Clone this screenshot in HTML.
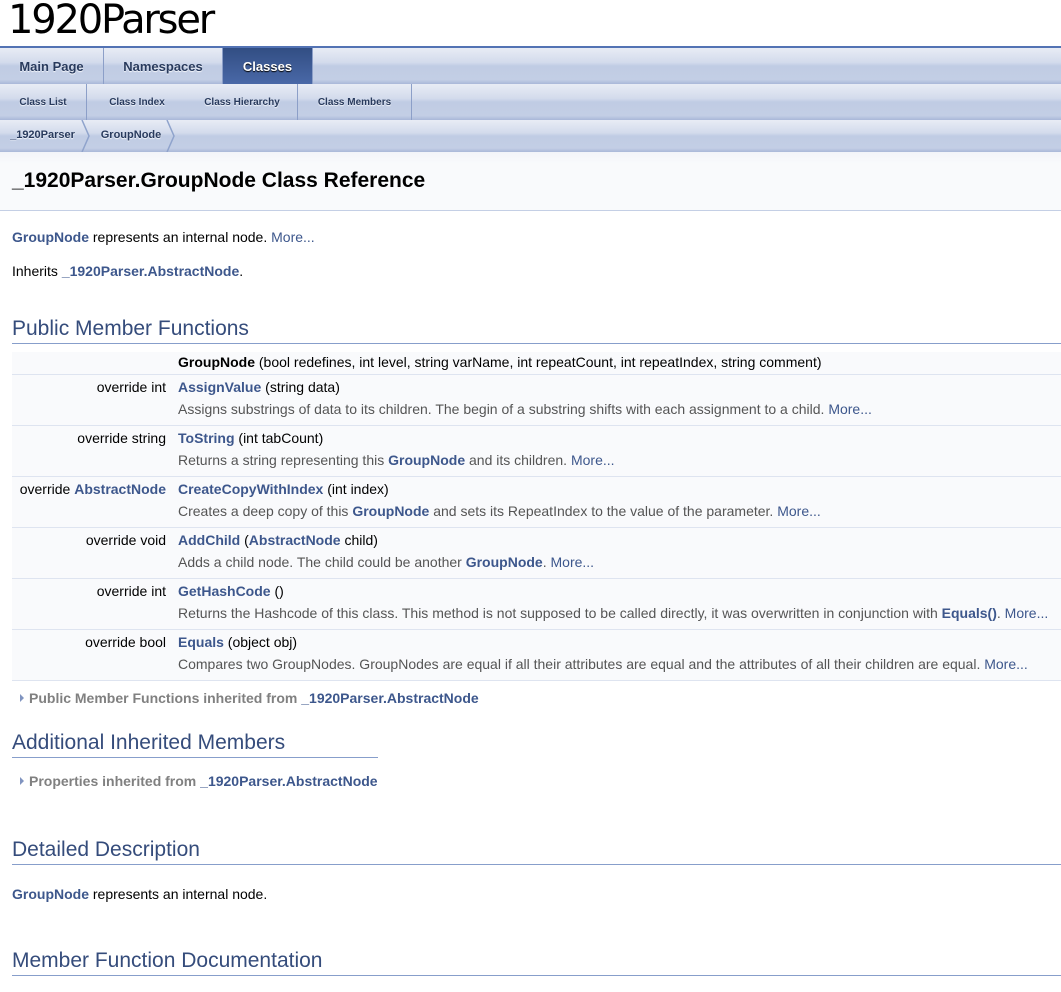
<!DOCTYPE html>
<html><head><meta charset="utf-8"><style>
*{margin:0;padding:0;box-sizing:border-box}
body{width:1061px;height:992px;overflow:hidden;background:#fff;font-family:"Liberation Sans",Arial,sans-serif;font-size:14px;color:#000;position:relative}
.a{position:absolute;white-space:nowrap}
b.l,.l{color:#3D578C;font-weight:bold}
.m{color:#3D578C}
.nav{position:absolute;left:0;width:1061px;height:37px;background:linear-gradient(#E8ECF5 0%,#D3DBEC 40%,#C0CCE4 50%,#C3CEE5 88%,#A9B8D8 100%)}
.nav .t{position:absolute;top:0;height:37px;line-height:37px;text-align:center;color:#283A5D;font-weight:bold;text-shadow:0 1px 1px rgba(255,255,255,.9);border-right:1px solid #8C9FC8}
.h2{position:absolute;left:12px;color:#354C7B;font-size:21px;border-bottom:1px solid #879ECB;height:26px;line-height:22px}
.row{position:absolute;left:12px;width:1049px;background:#F9FAFC;border-bottom:1px solid #DEE4F0}
.row .k{position:absolute;right:895px;top:4px;text-align:right;white-space:nowrap}
.row .n{position:absolute;left:166px;top:4px;white-space:nowrap}
.row .d{position:absolute;left:166px;top:26px;white-space:nowrap;color:#555}
.arr{display:inline-block;width:0;height:0;border-left:4px solid #8094C0;border-top:4px solid transparent;border-bottom:4px solid transparent;margin-right:5px;vertical-align:1px}
.inh{color:#808080;font-weight:bold}
</style></head><body>
<div class="a" style="left:8px;top:-3px;font-size:40px;font-family:'DejaVu Sans','Liberation Sans',sans-serif;letter-spacing:-2.2px">1920Parser</div>
<div style="position:absolute;left:0;top:46px;width:1061px;height:2px;background:#5373B4"></div>
<div class="nav" style="top:48px;height:36px">
 <div class="t" style="left:0;width:104px;font-size:13px">Main Page</div>
 <div class="t" style="left:104px;width:119px;font-size:13px">Namespaces</div>
 <div class="t" style="left:223px;width:90px;font-size:13px;color:#fff;text-shadow:0 1px 1px #000;background:linear-gradient(#324E83,#4A69A8)">Classes</div>
</div>
<div class="nav" style="top:84px;height:36px">
 <div class="t" style="left:0;width:87px;font-size:10px;top:0">Class List</div>
 <div class="t" style="left:87px;width:100px;font-size:10px;border-right:none">Class Index</div>
 <div class="t" style="left:187px;width:111px;font-size:10px">Class Hierarchy</div>
 <div class="t" style="left:298px;width:114px;font-size:10px">Class Members</div>
</div>
<div class="nav" style="top:120px;height:32px">
 <div class="t" style="left:0;width:85px;height:32px;line-height:31px;font-size:11px;border:none">_1920Parser</div>
 <svg class="a" style="left:80px;top:0" width="12" height="32"><path d="M2 0 L9 16 L2 32" fill="none" stroke="#8FA3CC" stroke-width="1.5"/></svg>
 <div class="t" style="left:92px;width:78px;height:32px;line-height:31px;font-size:11px;border:none">GroupNode</div>
 <svg class="a" style="left:165px;top:0" width="12" height="32"><path d="M2 0 L9 16 L2 32" fill="none" stroke="#8FA3CC" stroke-width="1.5"/></svg>
</div>
<div style="position:absolute;left:0;top:152px;width:1061px;height:59px;background:linear-gradient(#F2F4F9,#F9FAFC 20%);border-bottom:1px solid #C4CFE5"></div>
<div class="a" style="left:12px;top:169px;font-size:21px;font-weight:bold">_1920Parser.GroupNode Class Reference</div>

<div class="a" style="left:12px;top:229px"><span class="l">GroupNode</span> represents an internal node. <span class="m">More...</span></div>
<div class="a" style="left:12px;top:263px">Inherits <span class="l">_1920Parser.AbstractNode</span>.</div>

<div class="h2" style="top:318px;width:1049px">Public Member Functions</div>
<div class="row" style="top:352px;height:23px"><div class="n" style="top:2px"><b>GroupNode</b> (bool redefines, int level, string varName, int repeatCount, int repeatIndex, string comment)</div></div>
<div class="row" style="top:375px;height:51px"><div class="k">override int</div><div class="n"><span class="l">AssignValue</span> (string data)</div><div class="d">Assigns substrings of data to its children. The begin of a substring shifts with each assignment to a child. <span class="m">More...</span></div></div>
<div class="row" style="top:426px;height:51px"><div class="k">override string</div><div class="n"><span class="l">ToString</span> (int tabCount)</div><div class="d">Returns a string representing this <span class="l">GroupNode</span> and its children. <span class="m">More...</span></div></div>
<div class="row" style="top:477px;height:51px"><div class="k">override <span class="l">AbstractNode</span></div><div class="n"><span class="l">CreateCopyWithIndex</span> (int index)</div><div class="d">Creates a deep copy of this <span class="l">GroupNode</span> and sets its RepeatIndex to the value of the parameter. <span class="m">More...</span></div></div>
<div class="row" style="top:528px;height:51px"><div class="k">override void</div><div class="n"><span class="l">AddChild</span> (<span class="l">AbstractNode</span> child)</div><div class="d">Adds a child node. The child could be another <span class="l">GroupNode</span>. <span class="m">More...</span></div></div>
<div class="row" style="top:579px;height:51px"><div class="k">override int</div><div class="n"><span class="l">GetHashCode</span> ()</div><div class="d">Returns the Hashcode of this class. This method is not supposed to be called directly, it was overwritten in conjunction with <span class="l">Equals()</span>. <span class="m">More...</span></div></div>
<div class="row" style="top:630px;height:51px"><div class="k">override bool</div><div class="n"><span class="l">Equals</span> (object obj)</div><div class="d">Compares two GroupNodes. GroupNodes are equal if all their attributes are equal and the attributes of all their children are equal. <span class="m">More...</span></div></div>

<div class="a inh" style="left:20px;top:690px"><span class="arr"></span>Public Member Functions inherited from <span class="l">_1920Parser.AbstractNode</span></div>

<div class="h2" style="top:732px;width:366px">Additional Inherited Members</div>
<div class="a inh" style="left:20px;top:773px"><span class="arr"></span>Properties inherited from <span class="l">_1920Parser.AbstractNode</span></div>

<div class="h2" style="top:839px;width:1049px">Detailed Description</div>
<div class="a" style="left:12px;top:886px"><span class="l">GroupNode</span> represents an internal node.</div>

<div class="h2" style="top:950px;width:1049px">Member Function Documentation</div>
</body></html>
